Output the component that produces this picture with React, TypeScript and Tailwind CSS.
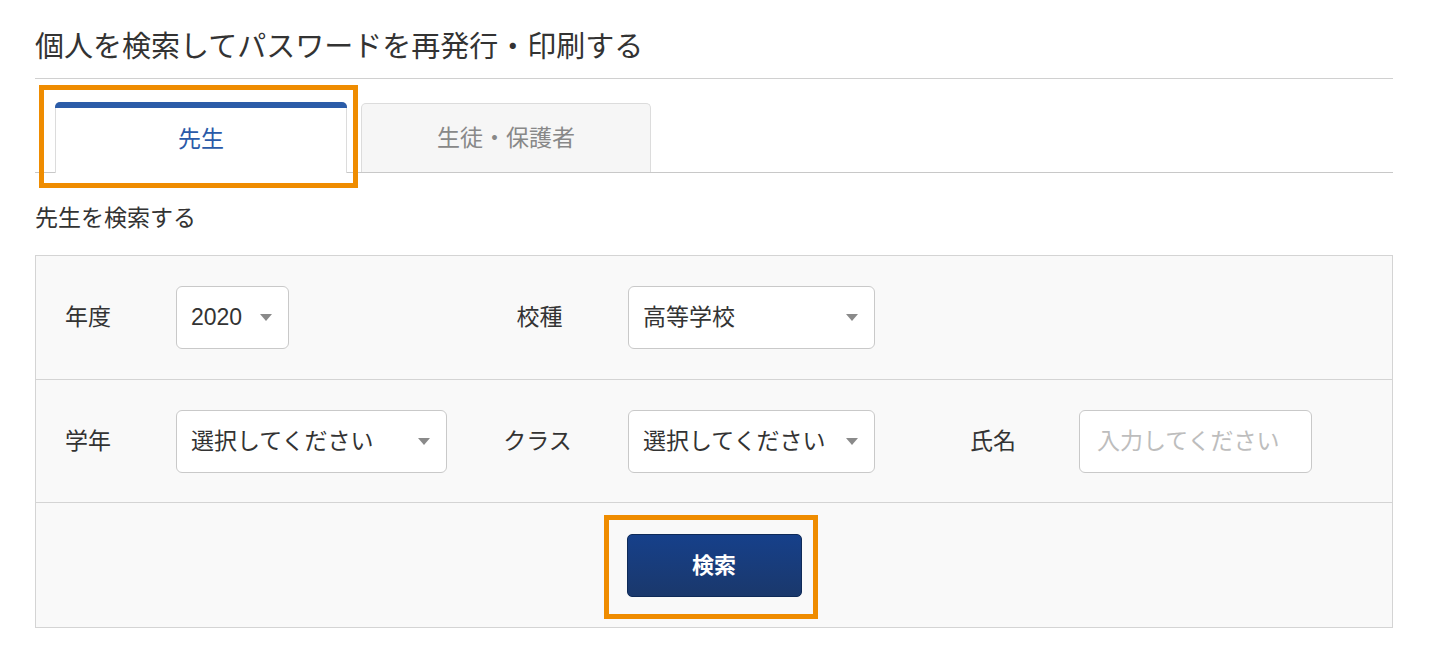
import React from 'react';

const FONT = { fontFamily: '"Liberation Sans", "Noto Sans CJK JP", sans-serif' };

function Caret() {
  return (
    <svg width="12" height="7" viewBox="0 0 12 7" className="shrink-0">
      <path d="M0 0h12L6 7z" fill="#8a8a8a" />
    </svg>
  );
}

function SelectBox({ value, width }: { value: string; width: string }) {
  return (
    <div
      className={`${width} h-[63px] flex items-center justify-between pl-[14px] pr-[16px] bg-white border border-[#c9c9c9] rounded-[6px] text-[23px] text-[#333]`}
    >
      <span>{value}</span>
      <Caret />
    </div>
  );
}

export default function App() {
  return (
    <div className="w-[1430px] h-[656px] bg-white text-[#333]" style={FONT}>
      <div className="ml-[35px] w-[1358px]">
        <h1 className="pt-[29px] pb-[13px] leading-[36px] text-[29px] font-normal text-[#333] border-b border-[#d0d0d0]">
          個人を検索してパスワードを再発行・印刷する
        </h1>

        <div className="mt-[23px] flex gap-[14px] pl-[20px] border-b border-[#c8c8c8]">
          <div className="relative w-[292px] h-[71px] -mb-px bg-white border-x border-[#dcdcdc] rounded-t-[5px] flex flex-col">
            <div className="h-[6px] bg-[#2b5ca8] rounded-t-[5px] -mx-px" />
            <div className="flex-1 flex items-center justify-center text-[23px] text-[#2a5aa8] pb-[2px]">先生</div>
            <div className="absolute -left-[17px] -right-[12px] -top-[17px] -bottom-[15px] border-[5px] border-[#ef8c00] pointer-events-none" />
          </div>
          <div className="w-[290px] h-[69px] mt-px bg-[#f6f6f6] border border-b-0 border-[#dcdcdc] rounded-t-[5px] flex items-center justify-center text-[23px] text-[#888]">
            生徒・保護者
          </div>
        </div>

        <p className="mt-[29px] leading-[32px] text-[23px] text-[#333]">先生を検索する</p>

        <div className="mt-[21px] border border-[#d4d4d4] bg-[#f9f9f9] divide-y divide-[#d4d4d4]">
          <div className="h-[124px] pl-[29px] grid grid-cols-[111px_271px_181px_247px_204px_233px] items-center">
            <span className="text-[23px]">年度</span>
            <SelectBox value="2020" width="w-[113px]" />
            <span className="text-[23px] text-center pl-[4px]">校種</span>
            <SelectBox value="高等学校" width="w-[247px]" />
            <span />
            <span />
          </div>

          <div className="h-[123px] pl-[29px] grid grid-cols-[111px_271px_181px_247px_204px_233px] items-center">
            <span className="text-[23px]">学年</span>
            <SelectBox value="選択してください" width="w-[271px]" />
            <span className="text-[23px] text-center">クラス</span>
            <SelectBox value="選択してください" width="w-[247px]" />
            <span className="text-[23px] pl-[95px]">氏名</span>
            <input
              placeholder="入力してください"
              className="w-[233px] h-[63px] px-[17px] bg-white border border-[#c9c9c9] rounded-[6px] text-[23px] placeholder:text-[#bdbdbd] outline-none"
              style={FONT}
            />
          </div>

          <div className="h-[124px] flex items-center justify-center">
            <div className="relative">
              <button
                className="w-[175px] h-[63px] rounded-[5px] border border-[#0e2a58] bg-gradient-to-b from-[#16408a] to-[#1a386c] text-white text-[22px] font-bold"
                style={FONT}
              >
                検索
              </button>
              <div className="absolute -left-[23px] -right-[16px] -top-[19px] -bottom-[22px] border-[5px] border-[#ef8c00] pointer-events-none" />
            </div>
          </div>
        </div>
      </div>
    </div>
  );
}
